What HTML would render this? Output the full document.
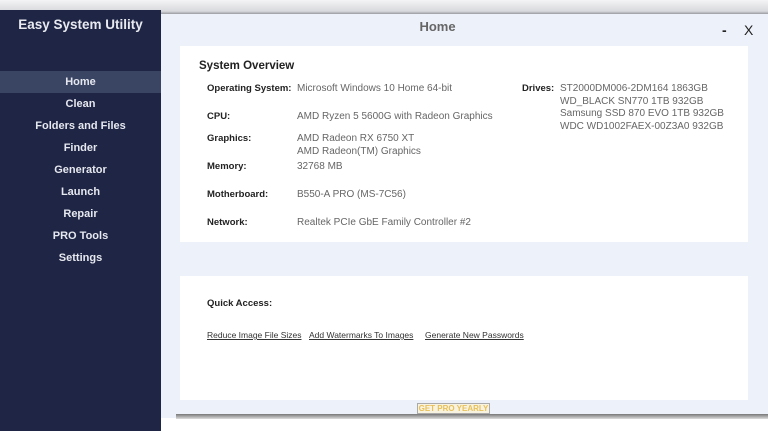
<!DOCTYPE html>
<html><head><style>
*{margin:0;padding:0;box-sizing:border-box}
body{width:768px;height:431px;overflow:hidden;background:#fff;font-family:"Liberation Sans",sans-serif;position:relative}
.top{position:absolute;left:0;top:0;width:768px;height:16px;background:linear-gradient(#f4f4f6,#d8d9dc 70%,#6b6e78)}
.side{position:absolute;left:0;top:10px;width:161px;height:421px;background:#1f2545}
.side h1{color:#e8eaf0;font-size:13.5px;font-weight:bold;text-align:center;margin-top:7px}
.nav{position:absolute;top:61px;left:0;width:161px}
.nav div{height:22px;line-height:22px;text-align:center;color:#e6e8ef;font-size:11px;font-weight:bold}
.nav .act{background:#3a4463}
.main{position:absolute;left:161px;top:14px;width:607px;height:404px;background:#edf2fa}
.shadow{position:absolute;left:176px;top:414px;width:592px;height:5px;background:linear-gradient(#777,#ddd)}
.title{position:absolute;left:0;width:553px;top:5px;text-align:center;color:#666;font-size:13px;font-weight:bold}
.ctl{position:absolute;top:8px;font-size:14px;color:#222}
.card{position:absolute;background:#fff}
.lbl{position:absolute;font-size:9.5px;font-weight:bold;color:#222}
.val{position:absolute;font-size:10px;color:#666;line-height:12.5px}
a{position:absolute;font-size:8.5px;color:#333;text-decoration:underline}
.pro{position:absolute;left:256px;top:389px;width:73px;height:11px;border:1px solid #aaa;background:#f8f3e0;color:#e8c05a;font-size:8px;font-weight:bold;text-align:center;line-height:9px}
</style></head><body>
<div class="top"></div>
<div class="side"><h1>Easy System Utility</h1>
<div class="nav"><div class="act">Home</div><div>Clean</div><div>Folders and Files</div><div>Finder</div><div>Generator</div><div>Launch</div><div>Repair</div><div>PRO Tools</div><div>Settings</div></div></div>
<div class="main">
<div class="title">Home</div>
<div class="ctl" style="left:561px;font-weight:bold">-</div>
<div class="ctl" style="left:583px">X</div>
<div class="card" style="left:19px;top:32px;width:568px;height:196px">
<div class="lbl" style="left:19px;top:14px;font-size:11.5px">System Overview</div>
<div class="lbl" style="left:27px;top:37px">Operating System:</div><div class="val" style="left:117px;top:37px">Microsoft Windows 10 Home 64-bit</div>
<div class="lbl" style="left:27px;top:65px">CPU:</div><div class="val" style="left:117px;top:65px">AMD Ryzen 5 5600G with Radeon Graphics</div>
<div class="lbl" style="left:27px;top:87px">Graphics:</div><div class="val" style="left:117px;top:87px">AMD Radeon RX 6750 XT<br>AMD Radeon(TM) Graphics</div>
<div class="lbl" style="left:27px;top:115px">Memory:</div><div class="val" style="left:117px;top:115px">32768 MB</div>
<div class="lbl" style="left:27px;top:143px">Motherboard:</div><div class="val" style="left:117px;top:143px">B550-A PRO (MS-7C56)</div>
<div class="lbl" style="left:27px;top:171px">Network:</div><div class="val" style="left:117px;top:171px">Realtek PCIe GbE Family Controller #2</div>
<div class="lbl" style="left:342px;top:37px">Drives:</div><div class="val" style="left:380px;top:37px">ST2000DM006-2DM164 1863GB<br>WD_BLACK SN770 1TB 932GB<br>Samsung SSD 870 EVO 1TB 932GB<br>WDC WD1002FAEX-00Z3A0 932GB</div>
</div>
<div class="card" style="left:19px;top:262px;width:568px;height:124px">
<div class="lbl" style="left:27px;top:22px">Quick Access:</div>
<a style="left:27px;top:54px">Reduce Image File Sizes</a>
<a style="left:129px;top:54px">Add Watermarks To Images</a>
<a style="left:245px;top:54px">Generate New Passwords</a>
</div>
<div class="pro">GET PRO YEARLY</div>
</div>
<div class="shadow"></div>
</body></html>
